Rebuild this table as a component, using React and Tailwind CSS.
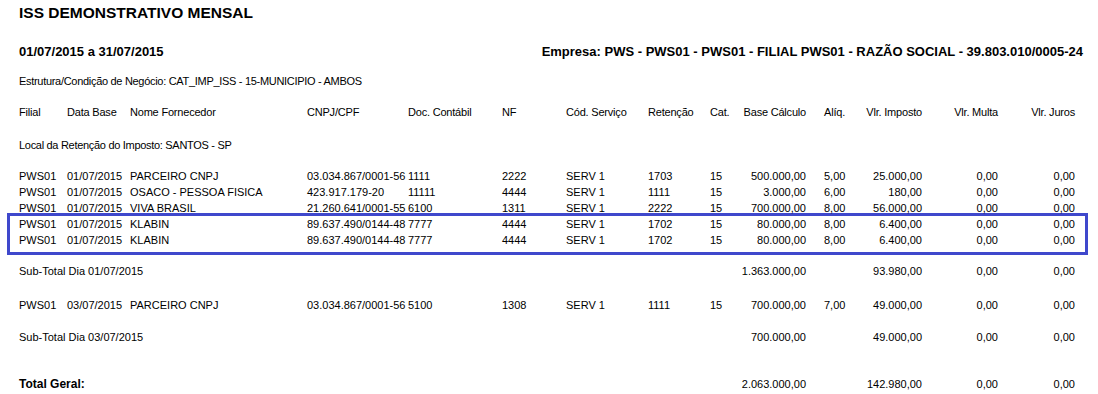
import React from 'react';

const COLS = [
    { key: 'filial', w: 'w-[48px]' },
    { key: 'data', w: 'w-[63px]' },
    { key: 'nome', w: 'w-[177px]' },
    { key: 'cnpj', w: 'w-[101px]' },
    { key: 'doc', w: 'w-[94px]' },
    { key: 'nf', w: 'w-[64px]' },
    { key: 'cod', w: 'w-[82px]' },
    { key: 'ret', w: 'w-[62px]' },
    { key: 'cat', w: 'w-[30px]' },
    { key: 'base', w: 'w-[66px]', right: true },
    { key: 'aliq', w: 'w-[39px] pl-[18px]' },
    { key: 'imp', w: 'w-[77px]', right: true },
    { key: 'multa', w: 'w-[76px]', right: true },
    { key: 'juros', w: 'w-[77px]', right: true },
];

const HEADER = {
    filial: 'Filial', data: 'Data Base', nome: 'Nome Fornecedor', cnpj: 'CNPJ/CPF', doc: 'Doc. Contábil',
    nf: 'NF', cod: 'Cód. Serviço', ret: 'Retenção', cat: 'Cat.', base: 'Base Cálculo', aliq: 'Alíq.',
    imp: 'Vlr. Imposto', multa: 'Vlr. Multa', juros: 'Vlr. Juros',
};

const row = (nome, cnpj, doc, nf, ret, base, aliq, imp, data = '01/07/2015') => ({
    filial: 'PWS01', data, nome, cnpj, doc, nf, cod: 'SERV 1', ret, cat: '15', base, aliq, imp, multa: '0,00', juros: '0,00',
});

const DAY1 = [
    row('PARCEIRO CNPJ', '03.034.867/0001-56', '1111', '2222', '1703', '500.000,00', '5,00', '25.000,00'),
    row('OSACO - PESSOA FISICA', '423.917.179-20', '11111', '4444', '1111', '3.000,00', '6,00', '180,00'),
    row('VIVA BRASIL', '21.260.641/0001-55', '6100', '1311', '2222', '700.000,00', '8,00', '56.000,00'),
];

const MARKED = [
    row('KLABIN', '89.637.490/0144-48', '7777', '4444', '1702', '80.000,00', '8,00', '6.400,00'),
    row('KLABIN', '89.637.490/0144-48', '7777', '4444', '1702', '80.000,00', '8,00', '6.400,00'),
];

const DAY3 = row('PARCEIRO CNPJ', '03.034.867/0001-56', '5100', '1308', '1111', '700.000,00', '7,00', '49.000,00', '03/07/2015');

const Row = ({ data, className = '' }) => (
    <div className={`flex h-[16px] items-center whitespace-nowrap ${className}`}>
        {COLS.map(c => (
            <div key={c.key} className={`${c.w} shrink-0 flex ${c.right ? 'justify-end' : ''}`}>
                {data[c.key] || ''}
            </div>
        ))}
    </div>
);

const Total = ({ label, base, imp }) => (
    <Row data={{ filial: label, base, imp, multa: '0,00', juros: '0,00' }} />
);

export default function App() {
    return (
        <div className="w-[1098px] h-[394px] bg-white text-black pl-[19px] pr-[23px] overflow-hidden font-['Liberation_Sans',Arial,sans-serif] text-[11px]">
            <h1 className="pt-[3px] h-[23px] leading-[20px] text-[15.5px] font-bold">ISS DEMONSTRATIVO MENSAL</h1>

            <div className="mt-[21px] h-[16px] flex items-center justify-between font-bold text-[13px]">
                <span>01/07/2015 a 31/07/2015</span>
                <span className="-mr-[8px]">Empresa: PWS - PWS01 - PWS01 - FILIAL PWS01 - RAZÃO SOCIAL - 39.803.010/0005-24</span>
            </div>

            <div className="mt-[13px] h-[16px] flex items-center tracking-[-0.3px]">Estrutura/Condição de Negócio: CAT_IMP_ISS - 15-MUNICIPIO - AMBOS</div>

            <Row data={HEADER} className="mt-[15px] tracking-[-0.2px]" />

            <div className="mt-[17px] h-[16px] flex items-center tracking-[-0.3px]">Local da Retenção do Imposto: SANTOS - SP</div>

            <div className="mt-[15px]">
                {DAY1.map((r, i) => <Row key={i} data={r} />)}
            </div>

            {/* linhas marcadas */}
            <div className="-mt-[3px] -ml-[12px] -mr-[13px] pl-[9px] pb-[4px] border-[3px] border-[#3f48cc]">
                {MARKED.map((r, i) => <Row key={i} data={r} />)}
            </div>

            <div className="mt-[8px]">
                <Total label="Sub-Total Dia 01/07/2015" base="1.363.000,00" imp="93.980,00" />
            </div>
            <Row data={DAY3} className="mt-[18px]" />
            <div className="mt-[16px]">
                <Total label="Sub-Total Dia 03/07/2015" base="700.000,00" imp="49.000,00" />
            </div>
            <div className="mt-[31px]">
                <Row
                    className="[&>div:first-child]:font-bold [&>div:first-child]:text-[12px]"
                    data={{ filial: 'Total Geral:', base: '2.063.000,00', imp: '142.980,00', multa: '0,00', juros: '0,00' }}
                />
            </div>
        </div>
    );
}
